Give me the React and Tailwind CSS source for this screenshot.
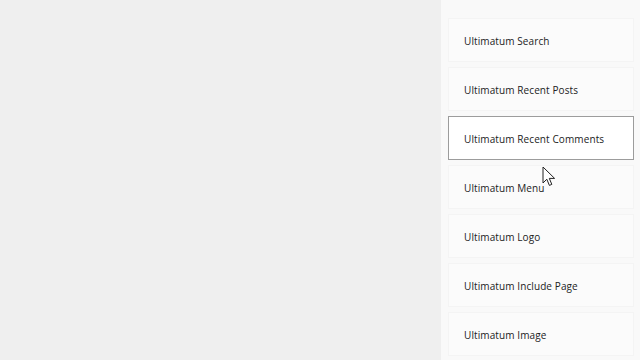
import React from 'react';

const widgets = [
  'Ultimatum Search',
  'Ultimatum Recent Posts',
  'Ultimatum Recent Comments',
  'Ultimatum Menu',
  'Ultimatum Logo',
  'Ultimatum Include Page',
  'Ultimatum Image',
];

function Cursor() {
  return (
    <svg width="16" height="22" viewBox="0 0 16 22" className="absolute left-[542px] top-[166px]">
      <path
        d="M1 1 L1 17 L4.8 13.2 L7.4 19.4 L9.8 18.4 L7.3 12.4 L12.6 12.4 Z"
        fill="#fff"
        stroke="#222"
        strokeWidth="1"
        strokeLinejoin="round"
      />
    </svg>
  );
}

export default function App() {
  return (
    <div className="relative flex w-[640px] h-[360px] overflow-hidden bg-[#efefef]" style={{ fontFamily: '"Open Sans", "Liberation Sans", sans-serif' }}>
      <div className="flex-1" />
      <div className="w-[199px] h-full bg-[#f9f9f9] pt-[18px] pl-[7px] pr-[6px] flex flex-col gap-[5px]">
        {widgets.map((w, i) => (
          <div
            key={w}
            className={`h-[44px] shrink-0 flex items-center pl-[15px] pt-[3px] text-[10px] text-[#222] tracking-[0.1px] border ${
              i === 2 ? 'bg-white border-[#9c9c9c]' : 'bg-[#fbfbfb] border-[#f4f4f4]'
            }`}
          >
            {w}
          </div>
        ))}
      </div>
      <Cursor />
    </div>
  );
}
